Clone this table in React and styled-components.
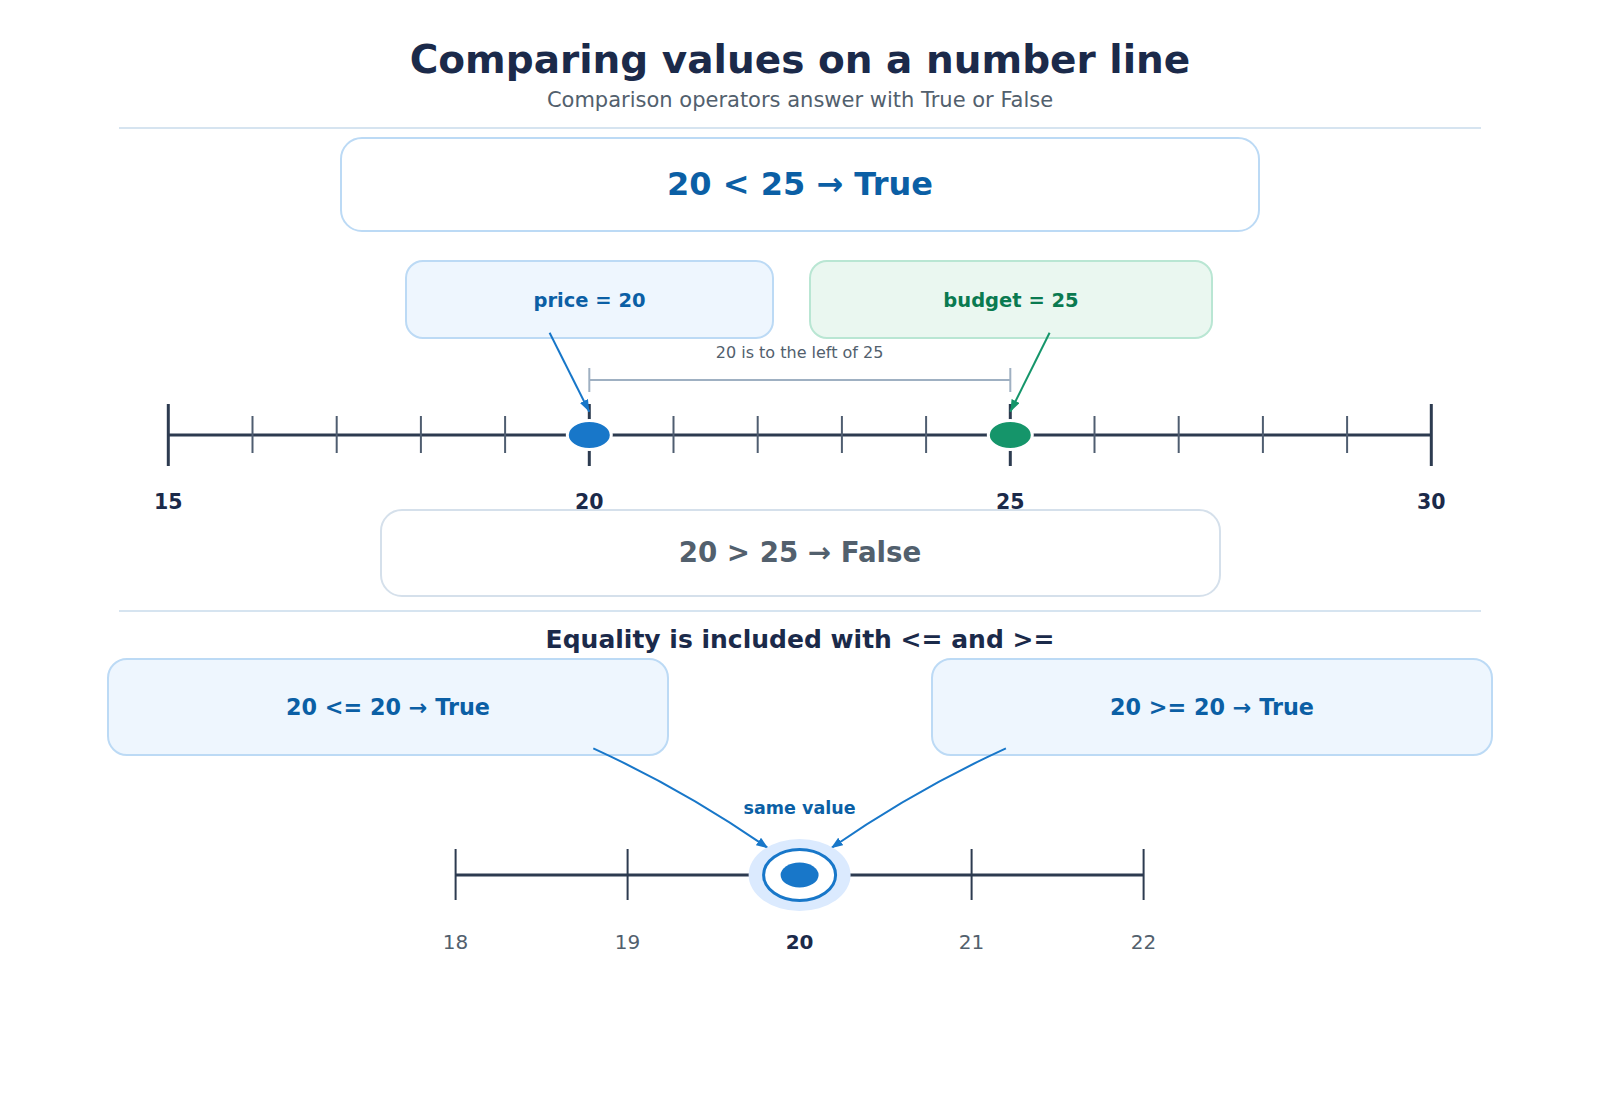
import React from "react";
import styled, { createGlobalStyle } from "styled-components";

const GlobalStyle = createGlobalStyle`
  html, body {
    margin: 0;
    padding: 0;
    background: #ffffff;
  }
  body {
    font-family: "DejaVu Sans", "Noto Sans", sans-serif;
  }
`;

const Page = styled.div`
  width: 1600px;
  height: 1100px;
  display: flex;
  flex-direction: column;
  align-items: center;
  background: #ffffff;
`;

const Title = styled.h1`
  margin: 37px 0 0;
  font-size: 39px;
  line-height: 46px;
  font-weight: 700;
  color: #1b2a4a;
`;

const Subtitle = styled.p`
  margin: 5px 0 0;
  font-size: 21px;
  line-height: 24px;
  color: #52606d;
`;

const Divider = styled.div`
  width: 1362px;
  height: 2px;
  background: #d6e4f0;
  margin-top: ${(p) => p.$top}px;
`;

const ResultBox = styled.div`
  box-sizing: border-box;
  width: ${(p) => p.$width}px;
  height: ${(p) => p.$height}px;
  margin-top: ${(p) => p.$top}px;
  padding-bottom: 2px;
  display: flex;
  align-items: center;
  justify-content: center;
  border: 2px solid ${(p) => (p.$muted ? "#d5e0eb" : "#bcdaf5")};
  border-radius: 22px;
  background: #ffffff;
  font-size: ${(p) => p.$size}px;
  font-weight: 700;
  color: ${(p) => (p.$muted ? "#52606d" : "#0b5fa5")};
`;

const ValueRow = styled.div`
  box-sizing: border-box;
  width: 1600px;
  margin-top: 28px;
  padding-left: 405px;
  display: flex;
  gap: 35px;
`;

const tones = {
  blue: { bg: "#eef6fe", border: "#bcdaf5", text: "#0b5fa5" },
  green: { bg: "#eaf7f0", border: "#b9e6d3", text: "#0a7a50" },
};

const ValueCard = styled.div`
  box-sizing: border-box;
  width: ${(p) => p.$width}px;
  height: 79px;
  padding-top: 1px;
  display: flex;
  align-items: center;
  justify-content: center;
  border: 2px solid ${(p) => tones[p.$tone].border};
  background: ${(p) => tones[p.$tone].bg};
  border-radius: 18px;
  font-size: 19.5px;
  font-weight: 700;
  color: ${(p) => tones[p.$tone].text};
`;

const LineSvg = styled.svg`
  display: block;
  overflow: visible;
  font-family: "DejaVu Sans", sans-serif;
`;

const Heading = styled.h2`
  margin: 14px 0 0;
  font-size: 25px;
  line-height: 28px;
  font-weight: 700;
  color: #1b2a4a;
`;

const EqualityRow = styled.div`
  box-sizing: border-box;
  width: 1600px;
  margin-top: 4px;
  padding: 0 107px;
  display: flex;
  justify-content: space-between;
`;

const EqualityCard = styled.div`
  box-sizing: border-box;
  width: 562px;
  height: 98px;
  display: flex;
  align-items: center;
  justify-content: center;
  border: 2px solid #bcdaf5;
  background: #eef6fe;
  border-radius: 20px;
  font-size: 22.3px;
  font-weight: 700;
  color: #0b5fa5;
`;

const LINE = "#2d3b50";
const MINOR = "#4f5d70";
const BLUE = "#1877c9";
const GREEN = "#15956a";

const x1 = (v) => 168.3 + (v - 15) * 84.2;
const x2 = (v) => 799.6 + (v - 20) * 172;

const Head = ({ id, color }) => (
  <marker
    id={id}
    markerUnits="userSpaceOnUse"
    markerWidth="12"
    markerHeight="9"
    refX="12"
    refY="4.5"
    orient="auto"
  >
    <path d="M0,0 L12,4.5 L0,9 z" fill={color} />
  </marker>
);

const CompareLine = () => {
  const minor = [];
  for (let v = 16; v < 30; v++) if (v !== 20 && v !== 25) minor.push(v);
  return (
    <LineSvg width="1600" height="170" viewBox="0 0 1600 170">
      <defs>
        <Head id="headBlue" color={BLUE} />
        <Head id="headGreen" color={GREEN} />
      </defs>
      <text x="799.6" y="19.3" textAnchor="middle" fontSize="16" fill="#52606d">
        20 is to the left of 25
      </text>
      <g stroke="#9fb0c2" strokeWidth="2">
        <line x1={x1(20)} y1="41" x2={x1(25)} y2="41" />
        <line x1={x1(20)} y1="29" x2={x1(20)} y2="53" />
        <line x1={x1(25)} y1="29" x2={x1(25)} y2="53" />
      </g>
      <line x1={x1(15)} y1="96" x2={x1(30)} y2="96" stroke={LINE} strokeWidth="3" />
      {minor.map((v) => (
        <line key={v} x1={x1(v)} y1="77" x2={x1(v)} y2="114" stroke={MINOR} strokeWidth="2" />
      ))}
      {[15, 20, 25, 30].map((v) => (
        <line key={v} x1={x1(v)} y1="65" x2={x1(v)} y2="127" stroke={LINE} strokeWidth="3" />
      ))}
      <ellipse cx={x1(20)} cy="96" rx="22" ry="14.5" fill={BLUE} stroke="#ffffff" strokeWidth="3" />
      <ellipse cx={x1(25)} cy="96" rx="22" ry="14.5" fill={GREEN} stroke="#ffffff" strokeWidth="3" />
      <line x1="549.6" y1="-6.3" x2={x1(20)} y2="72.7" stroke={BLUE} strokeWidth="2" markerEnd="url(#headBlue)" />
      <line x1="1049.6" y1="-6.3" x2={x1(25)} y2="72.7" stroke={GREEN} strokeWidth="2" markerEnd="url(#headGreen)" />
      {[15, 20, 25, 30].map((v) => (
        <text key={v} x={x1(v)} y="169.8" textAnchor="middle" fontSize="20.5" fontWeight="700" fill="#1b2a4a">
          {v}
        </text>
      ))}
    </LineSvg>
  );
};

const EqualLine = () => (
  <LineSvg width="1600" height="200" viewBox="0 0 1600 200">
    <defs>
      <Head id="headSame" color={BLUE} />
    </defs>
    <text x="799.6" y="57.8" textAnchor="middle" fontSize="17.5" fontWeight="700" fill="#0b5fa5">
      same value
    </text>
    <path d="M593.3,-7.7 Q685.3,34.5 768.3,92.3" fill="none" stroke={BLUE} strokeWidth="2" markerEnd="url(#headSame)" />
    <path d="M1005.9,-7.7 Q913.9,34.5 830.9,92.3" fill="none" stroke={BLUE} strokeWidth="2" markerEnd="url(#headSame)" />
    <line x1={x2(18)} y1="119" x2={x2(22)} y2="119" stroke={LINE} strokeWidth="3" />
    {[18, 19, 20, 21, 22].map((v) => (
      <line key={v} x1={x2(v)} y1="93" x2={x2(v)} y2="144" stroke={LINE} strokeWidth="2" />
    ))}
    <ellipse cx={x2(20)} cy="119" rx="51" ry="36" fill="#dbeafe" />
    <ellipse cx={x2(20)} cy="119" rx="36" ry="25.5" fill="#ffffff" stroke={BLUE} strokeWidth="3" />
    <ellipse cx={x2(20)} cy="119" rx="19" ry="12.5" fill={BLUE} />
    {[18, 19, 20, 21, 22].map((v) => (
      <text
        key={v}
        x={x2(v)}
        y="193.3"
        textAnchor="middle"
        fontSize="20"
        fontWeight={v === 20 ? 700 : 400}
        fill={v === 20 ? "#1b2a4a" : "#52606d"}
      >
        {v}
      </text>
    ))}
  </LineSvg>
);

const App = () => {
  return (
    <>
      <GlobalStyle />
      <Page>
        <Title>Comparing values on a number line</Title>
        <Subtitle>Comparison operators answer with True or False</Subtitle>
        <Divider $top={15} />
        <ResultBox $width={920} $height={95} $top={8} $size={32}>
          20 &lt; 25 → True
        </ResultBox>
        <ValueRow>
          <ValueCard $tone="blue" $width={369}>price = 20</ValueCard>
          <ValueCard $tone="green" $width={404}>budget = 25</ValueCard>
        </ValueRow>
        <CompareLine />
        <ResultBox $muted $width={841} $height={88} $top={0} $size={27.7}>
          20 &gt; 25 → False
        </ResultBox>
        <Divider $top={13} />
        <Heading>Equality is included with &lt;= and &gt;=</Heading>
        <EqualityRow>
          <EqualityCard>20 &lt;= 20 → True</EqualityCard>
          <EqualityCard>20 &gt;= 20 → True</EqualityCard>
        </EqualityRow>
        <EqualLine />
      </Page>
    </>
  );
};

export default App;
